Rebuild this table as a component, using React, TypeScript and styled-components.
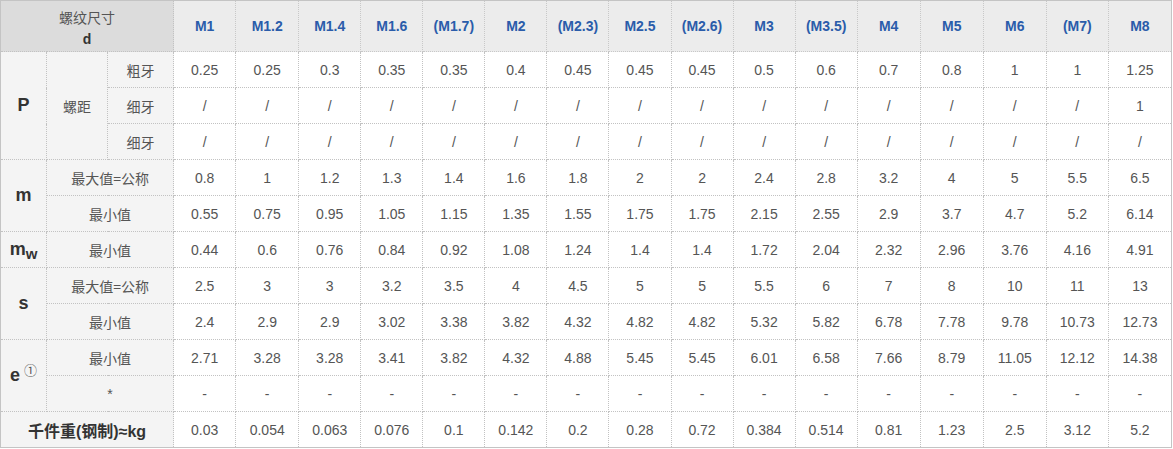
import React from "react";
import styled, { createGlobalStyle } from "styled-components";

const Global = createGlobalStyle`
  html, body { margin: 0; padding: 0; background: #fff; }
  body { font-family: "Liberation Sans", Arial, "Noto Sans CJK SC", sans-serif; }
`;

const Table = styled.table`
  width: 1172px;
  table-layout: fixed;
  border-collapse: collapse;
  border: 1px solid #c4c4c4;
  font-family: "Liberation Sans", Arial, "Noto Sans CJK SC", sans-serif;
  font-size: 14px;
  color: #555;
`;

const HeadRow = styled.tr`
  height: 51px;
  background: #ececec;
`;

const Row = styled.tr`
  height: 36px;
`;

const Cell = styled.td<{ $label?: boolean }>`
  border: 1px dotted #c2c2c2;
  padding: 0;
  text-align: center;
  vertical-align: middle;
  background: ${(p) => (p.$label ? "#f4f4f4" : "#fff")};
  color: #555;
  white-space: nowrap;
`;

const Corner = styled.th`
  border: 1px dotted #c2c2c2;
  padding: 4px 0 0;
  background: #dcdcdc;
  font-weight: normal;
  color: #555;
  line-height: 22px;
  text-align: center;
  vertical-align: middle;
  font-family: "Noto Sans CJK SC", sans-serif;
  font-size: 14px;
`;

const CornerD = styled.b`
  display: block;
  font-family: "Liberation Sans", Arial, sans-serif;
  font-size: 14px;
  color: #333;
`;

const HeadCell = styled.th`
  border: 1px dotted #c8c8c8;
  padding: 0;
  font-weight: bold;
  color: #2a5caa;
  text-align: center;
  vertical-align: middle;
  font-size: 14px;
`;

const Big = styled.span`
  font-weight: bold;
  font-size: 18px;
  color: #333;
`;

const Sub = styled.sub`
  font-size: 15px;
  vertical-align: -4px;
  line-height: 0;
`;

const Circled = styled.sup`
  font-size: 13px;
  font-weight: normal;
  color: #555;
  vertical-align: 6px;
  line-height: 0;
  margin-left: 4px;
  font-family: "Noto Sans CJK SC", sans-serif;
`;

const Cjk = styled.span`
  font-family: "Noto Sans CJK SC", sans-serif;
  font-size: 14px;
`;

const Weight = styled.span`
  font-weight: bold;
  font-size: 16px;
  color: #333;
  font-family: "Liberation Sans", Arial, "Noto Sans CJK SC", sans-serif;
`;

const sizes = ["M1", "M1.2", "M1.4", "M1.6", "(M1.7)", "M2", "(M2.3)", "M2.5", "(M2.6)", "M3", "(M3.5)", "M4", "M5", "M6", "(M7)", "M8"];
const dataWidths = [62, 63, 62, 62, 62, 62, 62, 62, 62, 62, 62, 63, 63, 63, 62, 63];

const slash = Array(15).fill("/");
const dash = Array(16).fill("-");

const rows = {
  coarse: ["0.25", "0.25", "0.3", "0.35", "0.35", "0.4", "0.45", "0.45", "0.45", "0.5", "0.6", "0.7", "0.8", "1", "1", "1.25"],
  fine1: [...slash, "1"],
  fine2: Array(16).fill("/"),
  mMax: ["0.8", "1", "1.2", "1.3", "1.4", "1.6", "1.8", "2", "2", "2.4", "2.8", "3.2", "4", "5", "5.5", "6.5"],
  mMin: ["0.55", "0.75", "0.95", "1.05", "1.15", "1.35", "1.55", "1.75", "1.75", "2.15", "2.55", "2.9", "3.7", "4.7", "5.2", "6.14"],
  mw: ["0.44", "0.6", "0.76", "0.84", "0.92", "1.08", "1.24", "1.4", "1.4", "1.72", "2.04", "2.32", "2.96", "3.76", "4.16", "4.91"],
  sMax: ["2.5", "3", "3", "3.2", "3.5", "4", "4.5", "5", "5", "5.5", "6", "7", "8", "10", "11", "13"],
  sMin: ["2.4", "2.9", "2.9", "3.02", "3.38", "3.82", "4.32", "4.82", "4.82", "5.32", "5.82", "6.78", "7.78", "9.78", "10.73", "12.73"],
  eMin: ["2.71", "3.28", "3.28", "3.41", "3.82", "4.32", "4.88", "5.45", "5.45", "6.01", "6.58", "7.66", "8.79", "11.05", "12.12", "14.38"],
  eStar: dash,
  weight: ["0.03", "0.054", "0.063", "0.076", "0.1", "0.142", "0.2", "0.28", "0.72", "0.384", "0.514", "0.81", "1.23", "2.5", "3.12", "5.2"],
};

const Values: React.FC<{ values: string[] }> = ({ values }) => (
  <>
    {values.map((v, i) => (
      <Cell key={i}>{v}</Cell>
    ))}
  </>
);

export default function App() {
  return (
    <>
      <Global />
      <Table>
        <colgroup>
          <col style={{ width: 46 }} />
          <col style={{ width: 61 }} />
          <col style={{ width: 66 }} />
          {dataWidths.map((w, i) => (
            <col key={i} style={{ width: w }} />
          ))}
        </colgroup>
        <thead>
          <HeadRow>
            <Corner colSpan={3}>
              螺纹尺寸
              <CornerD>d</CornerD>
            </Corner>
            {sizes.map((s) => (
              <HeadCell key={s}>{s}</HeadCell>
            ))}
          </HeadRow>
        </thead>
        <tbody>
          <Row>
            <Cell $label rowSpan={3}><Big>P</Big></Cell>
            <Cell $label rowSpan={3}><Cjk>螺距</Cjk></Cell>
            <Cell $label><Cjk>粗牙</Cjk></Cell>
            <Values values={rows.coarse} />
          </Row>
          <Row>
            <Cell $label><Cjk>细牙</Cjk></Cell>
            <Values values={rows.fine1} />
          </Row>
          <Row>
            <Cell $label><Cjk>细牙</Cjk></Cell>
            <Values values={rows.fine2} />
          </Row>
          <Row>
            <Cell $label rowSpan={2}><Big>m</Big></Cell>
            <Cell $label colSpan={2}><Cjk>最大值=公称</Cjk></Cell>
            <Values values={rows.mMax} />
          </Row>
          <Row>
            <Cell $label colSpan={2}><Cjk>最小值</Cjk></Cell>
            <Values values={rows.mMin} />
          </Row>
          <Row>
            <Cell $label><Big>m<Sub>w</Sub></Big></Cell>
            <Cell $label colSpan={2}><Cjk>最小值</Cjk></Cell>
            <Values values={rows.mw} />
          </Row>
          <Row>
            <Cell $label rowSpan={2}><Big>s</Big></Cell>
            <Cell $label colSpan={2}><Cjk>最大值=公称</Cjk></Cell>
            <Values values={rows.sMax} />
          </Row>
          <Row>
            <Cell $label colSpan={2}><Cjk>最小值</Cjk></Cell>
            <Values values={rows.sMin} />
          </Row>
          <Row>
            <Cell $label rowSpan={2}><Big>e<Circled>①</Circled></Big></Cell>
            <Cell $label colSpan={2}><Cjk>最小值</Cjk></Cell>
            <Values values={rows.eMin} />
          </Row>
          <Row>
            <Cell $label colSpan={2}>*</Cell>
            <Values values={rows.eStar} />
          </Row>
          <Row>
            <Cell $label colSpan={3}><Weight>千件重(钢制)≈kg</Weight></Cell>
            <Values values={rows.weight} />
          </Row>
        </tbody>
      </Table>
    </>
  );
}
